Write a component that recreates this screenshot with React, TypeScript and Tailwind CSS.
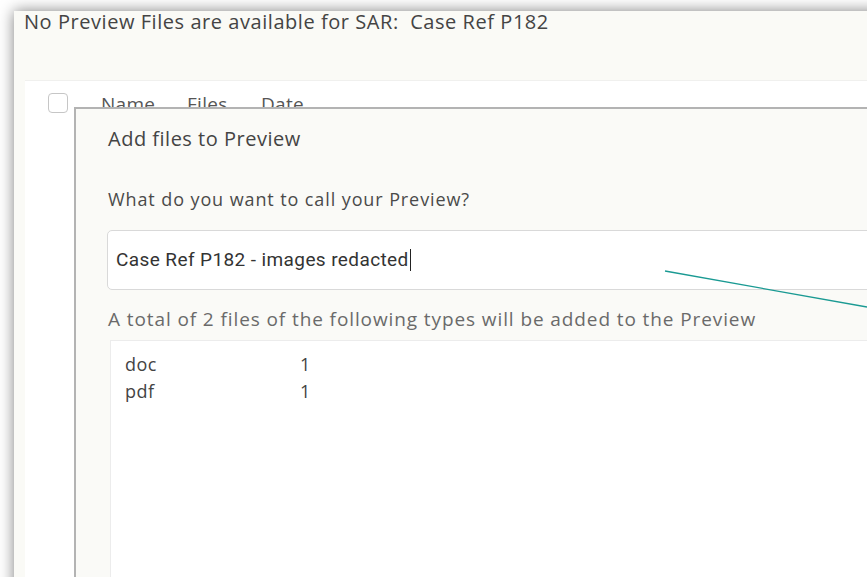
import React, { useState } from "react";

const fileTypes = [
    { ext: "doc", count: 1 },
    { ext: "pdf", count: 1 },
];

const AddFilesModal = () => {
    const [previewName, setPreviewName] = useState("Case Ref P182 - images redacted");

    return (
        <div className="absolute left-[74px] top-[107px] w-[900px] h-[520px] bg-[#fafaf7] border-l-2 border-t-2 border-[#b3b3b3] pl-[32px] pt-[16px] z-10">
            <h2 className="text-[20px] leading-[28px] tracking-[0.5px] text-[#444]">Add files to Preview</h2>
            <p className="mt-[34px] text-[18px] leading-[24px] tracking-[0.9px] text-[#4a4a4a]">What do you want to call your Preview?</p>
            <div className="mt-[19px] -ml-px h-[60px] bg-white border border-[#d9d9d9] rounded-[5px] flex items-center pl-[8px]">
                <span className="font-['Roboto'] text-[19px] tracking-[0.4px] text-[#333]">{previewName}</span>
                <span className="w-px h-[22px] bg-[#222] ml-px" />
                <input className="hidden" value={previewName} onChange={e => setPreviewName(e.target.value)} />
            </div>
            <p className="mt-[16px] text-[19px] leading-[26px] tracking-[0.9px] text-[#6a6a6a]">
                A total of 2 files of the following types will be added to the Preview
            </p>
            <div className="mt-[8px] ml-[2px] h-[300px] bg-white border-t border-l border-[#ececec] pt-[10px] pl-[14px]">
                {fileTypes.map(f => (
                    <div key={f.ext} className="flex text-[18px] leading-[27px] tracking-[0.5px] text-[#444]">
                        <span className="w-[175px]">{f.ext}</span>
                        <span>{f.count}</span>
                    </div>
                ))}
            </div>
        </div>
    );
};

export default function App() {
    return (
        <div className="relative w-[867px] h-[577px] overflow-hidden bg-white font-['Open_Sans',sans-serif] pl-[14px] pt-[11px]">
            <div className="w-[900px] h-[600px] bg-[#fafaf6] shadow-[0_0_14px_rgba(0,0,0,0.5)]">
                <div className="h-[69px] pl-[10px]">
                    <h1 className="text-[20px] leading-[21px] tracking-[0.55px] text-[#444]">
                        No Preview Files are available for SAR:&nbsp; Case Ref P182
                    </h1>
                </div>
                <div className="ml-[11px] h-[520px] bg-white border-t border-[#f0f0ee]">
                    <div className="flex items-start pt-[12px] pl-[23px]">
                        <div className="w-[20px] h-[20px] rounded-[4px] border-[1.5px] border-[#c6c6c6] bg-white" />
                        <div className="flex ml-[33px] -mt-[2px] text-[19px] leading-[26px] tracking-[0.3px] text-[#555]">
                            <span className="w-[86px]">Name</span>
                            <span className="w-[74px]">Files</span>
                            <span>Date</span>
                        </div>
                    </div>
                </div>
            </div>
            <AddFilesModal />
            <svg className="absolute left-0 top-0 z-20 pointer-events-none" width="867" height="577">
                <line x1="665" y1="271" x2="867" y2="307" stroke="#1a9a93" strokeWidth="1.3" />
            </svg>
        </div>
    );
}
